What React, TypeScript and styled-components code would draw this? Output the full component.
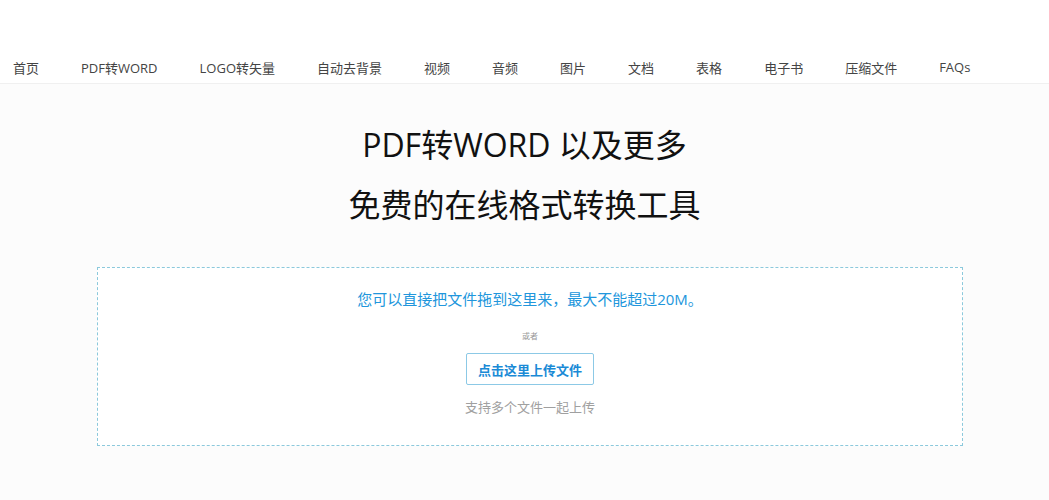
import React from "react";
import styled, { createGlobalStyle } from "styled-components";

const GlobalStyle = createGlobalStyle`
  html, body {
    margin: 0;
    padding: 0;
    background: #fcfcfc;
    font-family: "Open Sans", "Noto Sans CJK SC", sans-serif;
  }
`;

const Header = styled("header")`
  background: #ffffff;
  border-bottom: 1px solid #f0f0f0;
  padding-top: 51px;
`;

const Nav = styled("nav")`
  display: flex;
  align-items: center;
  height: 32px;
  padding-left: 13px;
  gap: 42px;
`;

const NavLink = styled("a")`
  font-size: 13px;
  color: #444;
  text-decoration: none;
  white-space: nowrap;
  cursor: pointer;
`;

const Main = styled("main")`
  display: flex;
  flex-direction: column;
  align-items: center;
  padding-top: 31px;
`;

const Title = styled("h1")`
  margin: 0;
  font-size: 32px;
  font-weight: 400;
  color: #111;
  line-height: 60px;
  text-align: center;
`;

const DropZone = styled("div")`
  box-sizing: border-box;
  width: 866px;
  height: 179px;
  margin-top: 32px;
  margin-left: 11px;
  border: 1px dashed #8cc9dc;
  background: #ffffff;
  display: flex;
  flex-direction: column;
  align-items: center;
  padding-top: 20px;
`;

const Hint = styled("p")`
  margin: 0;
  font-size: 15px;
  color: #2196dc;
  line-height: 22px;
`;

const Or = styled("p")`
  margin: 20px 0 0;
  font-size: 8px;
  color: #999;
  line-height: 12px;
`;

const UploadButton = styled("button")`
  margin-top: 11px;
  height: 32px;
  padding: 0 11px;
  border: 1px solid #8cc9e6;
  border-radius: 2px;
  background: #ffffff;
  color: #1a8ad6;
  font-family: inherit;
  font-size: 13px;
  font-weight: 700;
  cursor: pointer;
`;

const Note = styled("p")`
  margin: 12px 0 0;
  font-size: 13px;
  color: #a0a0a0;
  line-height: 20px;
`;

const links = [
  "首页",
  "PDF转WORD",
  "LOGO转矢量",
  "自动去背景",
  "视频",
  "音频",
  "图片",
  "文档",
  "表格",
  "电子书",
  "压缩文件",
  "FAQs",
];

export default function App() {
  return (
    <>
      <GlobalStyle />
      <Header>
        <Nav>
          {links.map((l) => (
            <NavLink key={l}>{l}</NavLink>
          ))}
        </Nav>
      </Header>
      <Main>
        <Title>PDF转WORD 以及更多</Title>
        <Title>免费的在线格式转换工具</Title>
        <DropZone>
          <Hint>您可以直接把文件拖到这里来，最大不能超过20M。</Hint>
          <Or>或者</Or>
          <UploadButton>点击这里上传文件</UploadButton>
          <Note>支持多个文件一起上传</Note>
        </DropZone>
      </Main>
    </>
  );
}
